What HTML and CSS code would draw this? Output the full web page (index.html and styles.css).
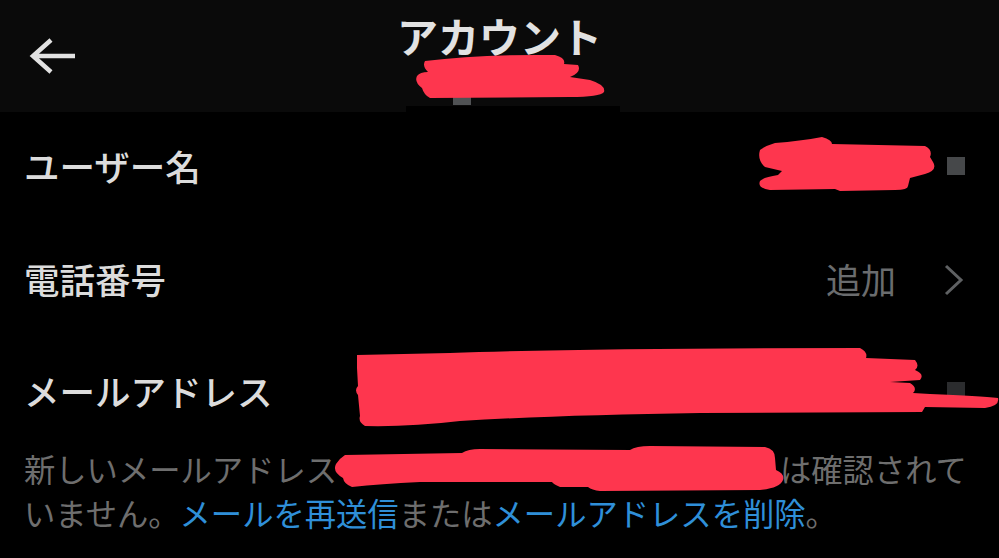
FILE: index.html
```html
<!DOCTYPE html>
<html lang="ja">
<head>
    <meta charset="UTF-8">
    <meta name="viewport" content="width=device-width, initial-scale=1.0">
    <title>アカウント</title>
    <link rel="stylesheet" href="styles.css">
</head>
<body>

    <header class="top-bar">
        <svg class="back-icon" viewBox="0 0 46 36" width="46" height="36">
            <path d="M22 2 L4 18 L22 34 M4 18 H46" fill="none" stroke="#e2e2e2" stroke-width="4.5"/>
        </svg>
        <h1>アカウント</h1>
        <span class="tofu tofu-title"></span>
        <div class="title-notch"></div>
    </header>

    <section class="rows">
        <div class="row">
            <span class="label">ユーザー名</span>
            <span class="tofu"></span>
        </div>
        <div class="row">
            <span class="label">電話番号</span>
            <span class="value">追加</span>
            <svg class="chevron" viewBox="0 0 20 32" width="20" height="32">
                <path d="M2 2 L17 16 L2 30" fill="none" stroke="#5f6163" stroke-width="3"/>
            </svg>
        </div>
        <div class="row">
            <span class="label">メールアドレス</span>
            <span class="tofu tofu-dim"></span>
        </div>
    </section>

    <p class="help">新しいメールアドレス<span class="hidden-mail"></span>は確認されていません。<a href="#">メールを再送信</a>または<a href="#">メールアドレスを削除</a>。</p>

    <!-- red marker scribbles drawn over the private values -->
    <svg class="scribbles" viewBox="0 0 999 558" width="999" height="558">
        <g fill="#fe364e">
            <path d="M425 61 Q480 54 555 55 Q566 58 564 64 L578 65 Q582 72 570 77 L590 80 Q606 85 604 92 Q600 97 570 97 L430 98 Q424 95 422 88 Q414 82 417 76 Q420 72 428 72 Q422 66 425 61 Z"/>
            <path d="M775 143 Q800 141 822 137 Q832 140 832 144 L925 146 Q933 150 930 157 L933 162 Q938 170 925 174 L910 178 L908 186 Q908 190 895 190 L840 191 L835 189 L770 190 Q757 188 760 181 Q764 177 778 175 L782 171 L765 167 Q757 160 760 150 Q765 146 775 143 Z"/>
            <path d="M357 355 L450 353 Q600 348 860 348 Q868 352 866 358 L915 360 Q920 366 915 370 Q925 374 920 380 L890 382 L910 383 Q918 388 913 393 L930 394 Q980 396 998 398 Q1000 406 985 408 L925 407 L922 412 L700 413 Q560 415 460 421 Q410 427 365 426 Q358 422 360 416 L358 395 Q354 390 358 386 L357 368 Z"/>
            <path d="M345 455 L462 453 Q468 449 480 449 L630 450 Q636 446 650 446 L765 447 Q775 449 775 458 L776 470 Q785 474 783 480 Q780 488 760 490 L600 491 Q592 490 588 487 L560 487 Q553 484 552 482 L420 482 Q380 484 352 487 Q344 484 343 478 Q332 472 336 464 Q340 458 345 455 Z"/>
        </g>
    </svg>

</body>
</html>
```

FILE: styles.css
```css
body {
    margin: 0;
    width: 999px;
    height: 558px;
    overflow: hidden;
    position: relative;
    background-color: #000;
    font-family: "Noto Sans CJK JP", "Noto Sans", sans-serif;
}
.top-bar {
    height: 112px;
    background-color: #0a0a0a;
    position: relative;
    display: flex;
    justify-content: center;
}
.top-bar h1 {
    margin: 0;
    font-size: 41px;
    line-height: 70px;
    font-weight: 700;
    color: #e2e2e2;
}
.back-icon {
    position: absolute;
    left: 29px;
    top: 38px;
}
.title-notch {
    position: absolute;
    left: 406px;
    top: 106px;
    width: 214px;
    height: 6px;
    background-color: #000;
}
.tofu {
    width: 18px;
    height: 18px;
    background-color: #46484a;
}
.tofu-title {
    position: absolute;
    left: 453px;
    top: 88px;
    height: 17px;
    background-color: #505254;
}
.tofu-dim {
    background-color: #2b2c2e;
}
.row {
    box-sizing: border-box;
    height: 112.5px;
    padding: 0 34px 5px 24px;
    display: flex;
    align-items: center;
}
.label {
    flex: 1;
    font-size: 35.5px;
    font-weight: 500;
    color: #dcdcdc;
}
.value {
    font-size: 35px;
    color: #6a6c6e;
    margin-right: 48px;
}
.chevron {
    margin: 3px 1px 0 0;
}
.help {
    margin: -3px 0 0;
    padding: 0 30px 0 24px;
    font-size: 31.3px;
    line-height: 44px;
    color: #6e6e6e;
}
.help a {
    color: #2f8fd8;
    text-decoration: none;
}
.hidden-mail {
    display: inline-block;
    width: 443px;
}
.scribbles {
    position: absolute;
    left: 0;
    top: 0;
}
```
